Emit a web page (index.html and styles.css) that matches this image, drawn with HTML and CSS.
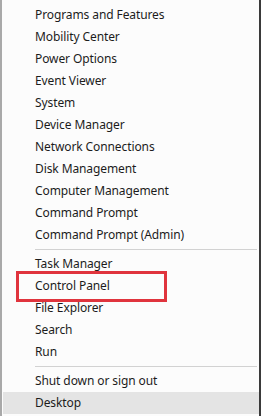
FILE: index.html
```html
<!DOCTYPE html>
<html lang="en">
<head>
    <meta charset="UTF-8">
    <meta name="viewport" content="width=device-width, initial-scale=1.0">
    <title>Quick Link Menu</title>
    <link rel="stylesheet" href="styles.css">
</head>
<body>
    <div class="menu">
        <div class="item">Programs and Features</div>
        <div class="item">Mobility Center</div>
        <div class="item">Power Options</div>
        <div class="item">Event Viewer</div>
        <div class="item">System</div>
        <div class="item">Device Manager</div>
        <div class="item">Network Connections</div>
        <div class="item">Disk Management</div>
        <div class="item">Computer Management</div>
        <div class="item">Command Prompt</div>
        <div class="item">Command Prompt (Admin)</div>
        <div class="separator"></div>
        <div class="item">Task Manager</div>
        <div class="item marked">Control Panel</div>
        <div class="item">File Explorer</div>
        <div class="item">Search</div>
        <div class="item">Run</div>
        <div class="separator"></div>
        <div class="item">Shut down or sign out</div>
        <div class="item active">Desktop</div>
    </div>
</body>
</html>
```

FILE: styles.css
```css
body {
    margin: 0;
    padding: 0;
    background-color: white;
    font-family: "Noto Sans", "Open Sans", sans-serif;
    font-size: 12px;
    color: #1c1c1c;
}

.menu {
    width: 261px;
    height: 416px;
    box-sizing: border-box;
    padding-top: 4px;
    border-left: 2px solid #a9a9a9;
    border-right: 2px solid #3a3a3a;
    background-color: #fcfcfc;
}

.item {
    height: 22px;
    line-height: 22px;
    padding-left: 33px;
    position: relative;
    letter-spacing: -0.1px;
}

.separator {
    height: 1px;
    background-color: #d2d2d2;
    margin: 3px 2px 3px 33px;
}

.marked::after {
    content: "";
    position: absolute;
    left: 14px;
    top: -4px;
    width: 145px;
    height: 25px;
    border: 3px solid #e0343d;
}

.active {
    background-color: #e4e4e4;
    margin-left: 1px;
    padding-left: 32px;
}
```
